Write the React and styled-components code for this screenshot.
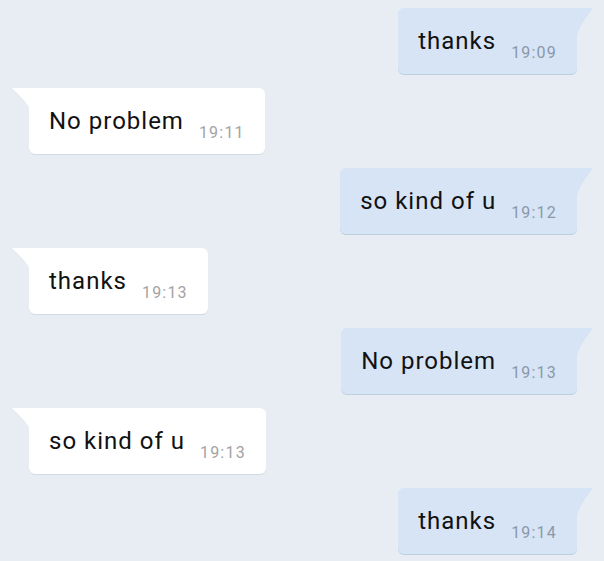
import React from 'react';
import styled, { createGlobalStyle } from 'styled-components';

const GlobalStyle = createGlobalStyle`
  html, body {
    margin: 0;
    padding: 0;
    background: #e8edf3;
  }
  body {
    font-family: Roboto, "Noto Sans", sans-serif;
  }
`;

const Chat = styled.div`
  width: 604px;
  height: 561px;
  box-sizing: border-box;
  padding: 8px 0 0;
  display: flex;
  flex-direction: column;
  gap: 14px;
  overflow: hidden;
`;

const Row = styled.div`
  display: flex;
  justify-content: ${p => (p.$out ? 'flex-end' : 'flex-start')};
  padding: ${p => (p.$out ? '0 27px 0 0' : '0 0 0 29px')};
`;

const Bubble = styled.div`
  position: relative;
  height: 66px;
  box-sizing: border-box;
  display: flex;
  align-items: flex-start;
  gap: 15px;
  padding: 19px 20px 0 20px;
  background: ${p => (p.$out ? '#d6e4f6' : '#ffffff')};
  border-radius: ${p => (p.$out ? '6px 0 6px 6px' : '0 6px 6px 6px')};
  box-shadow: 0 1px 0 ${p => (p.$out ? '#bfcfe2' : '#d3dae3')};
`;

const Tail = styled.svg`
  position: absolute;
  top: 0;
  ${p => (p.$out ? 'right: -16px;' : 'left: -17px;')}
  display: block;
`;

const Text = styled.span`
  font-size: 24px;
  line-height: 28px;
  letter-spacing: 1px;
  color: #111;
  white-space: nowrap;
`;

const Time = styled.span`
  margin-top: 16px;
  font-size: 16px;
  line-height: 20px;
  letter-spacing: 1.2px;
  color: ${p => (p.$out ? '#8b98a8' : '#a3a3a3')};
  white-space: nowrap;
`;

const messages = [
  { out: true, text: 'thanks', time: '19:09' },
  { out: false, text: 'No problem', time: '19:11' },
  { out: true, text: 'so kind of u', time: '19:12' },
  { out: false, text: 'thanks', time: '19:13' },
  { out: true, text: 'No problem', time: '19:13' },
  { out: false, text: 'so kind of u', time: '19:13' },
  { out: true, text: 'thanks', time: '19:14' },
];

const Message = ({ out, text, time }) => (
  <Row $out={out}>
    <Bubble $out={out}>
      {out ? (
        <Tail $out width="16" height="27" viewBox="0 0 16 27">
          <path d="M0 0 H16 C11 7 3 17 0 27 Z" fill="#d6e4f6" />
        </Tail>
      ) : (
        <Tail width="17" height="19" viewBox="0 0 17 19">
          <path d="M17 0 H0 C5 5 13 12 17 19 Z" fill="#ffffff" />
        </Tail>
      )}
      <Text>{text}</Text>
      <Time $out={out}>{time}</Time>
    </Bubble>
  </Row>
);

export default function App() {
  return (
    <>
      <GlobalStyle />
      <Chat>
        {messages.map((m, i) => (
          <Message key={i} {...m} />
        ))}
      </Chat>
    </>
  );
}
